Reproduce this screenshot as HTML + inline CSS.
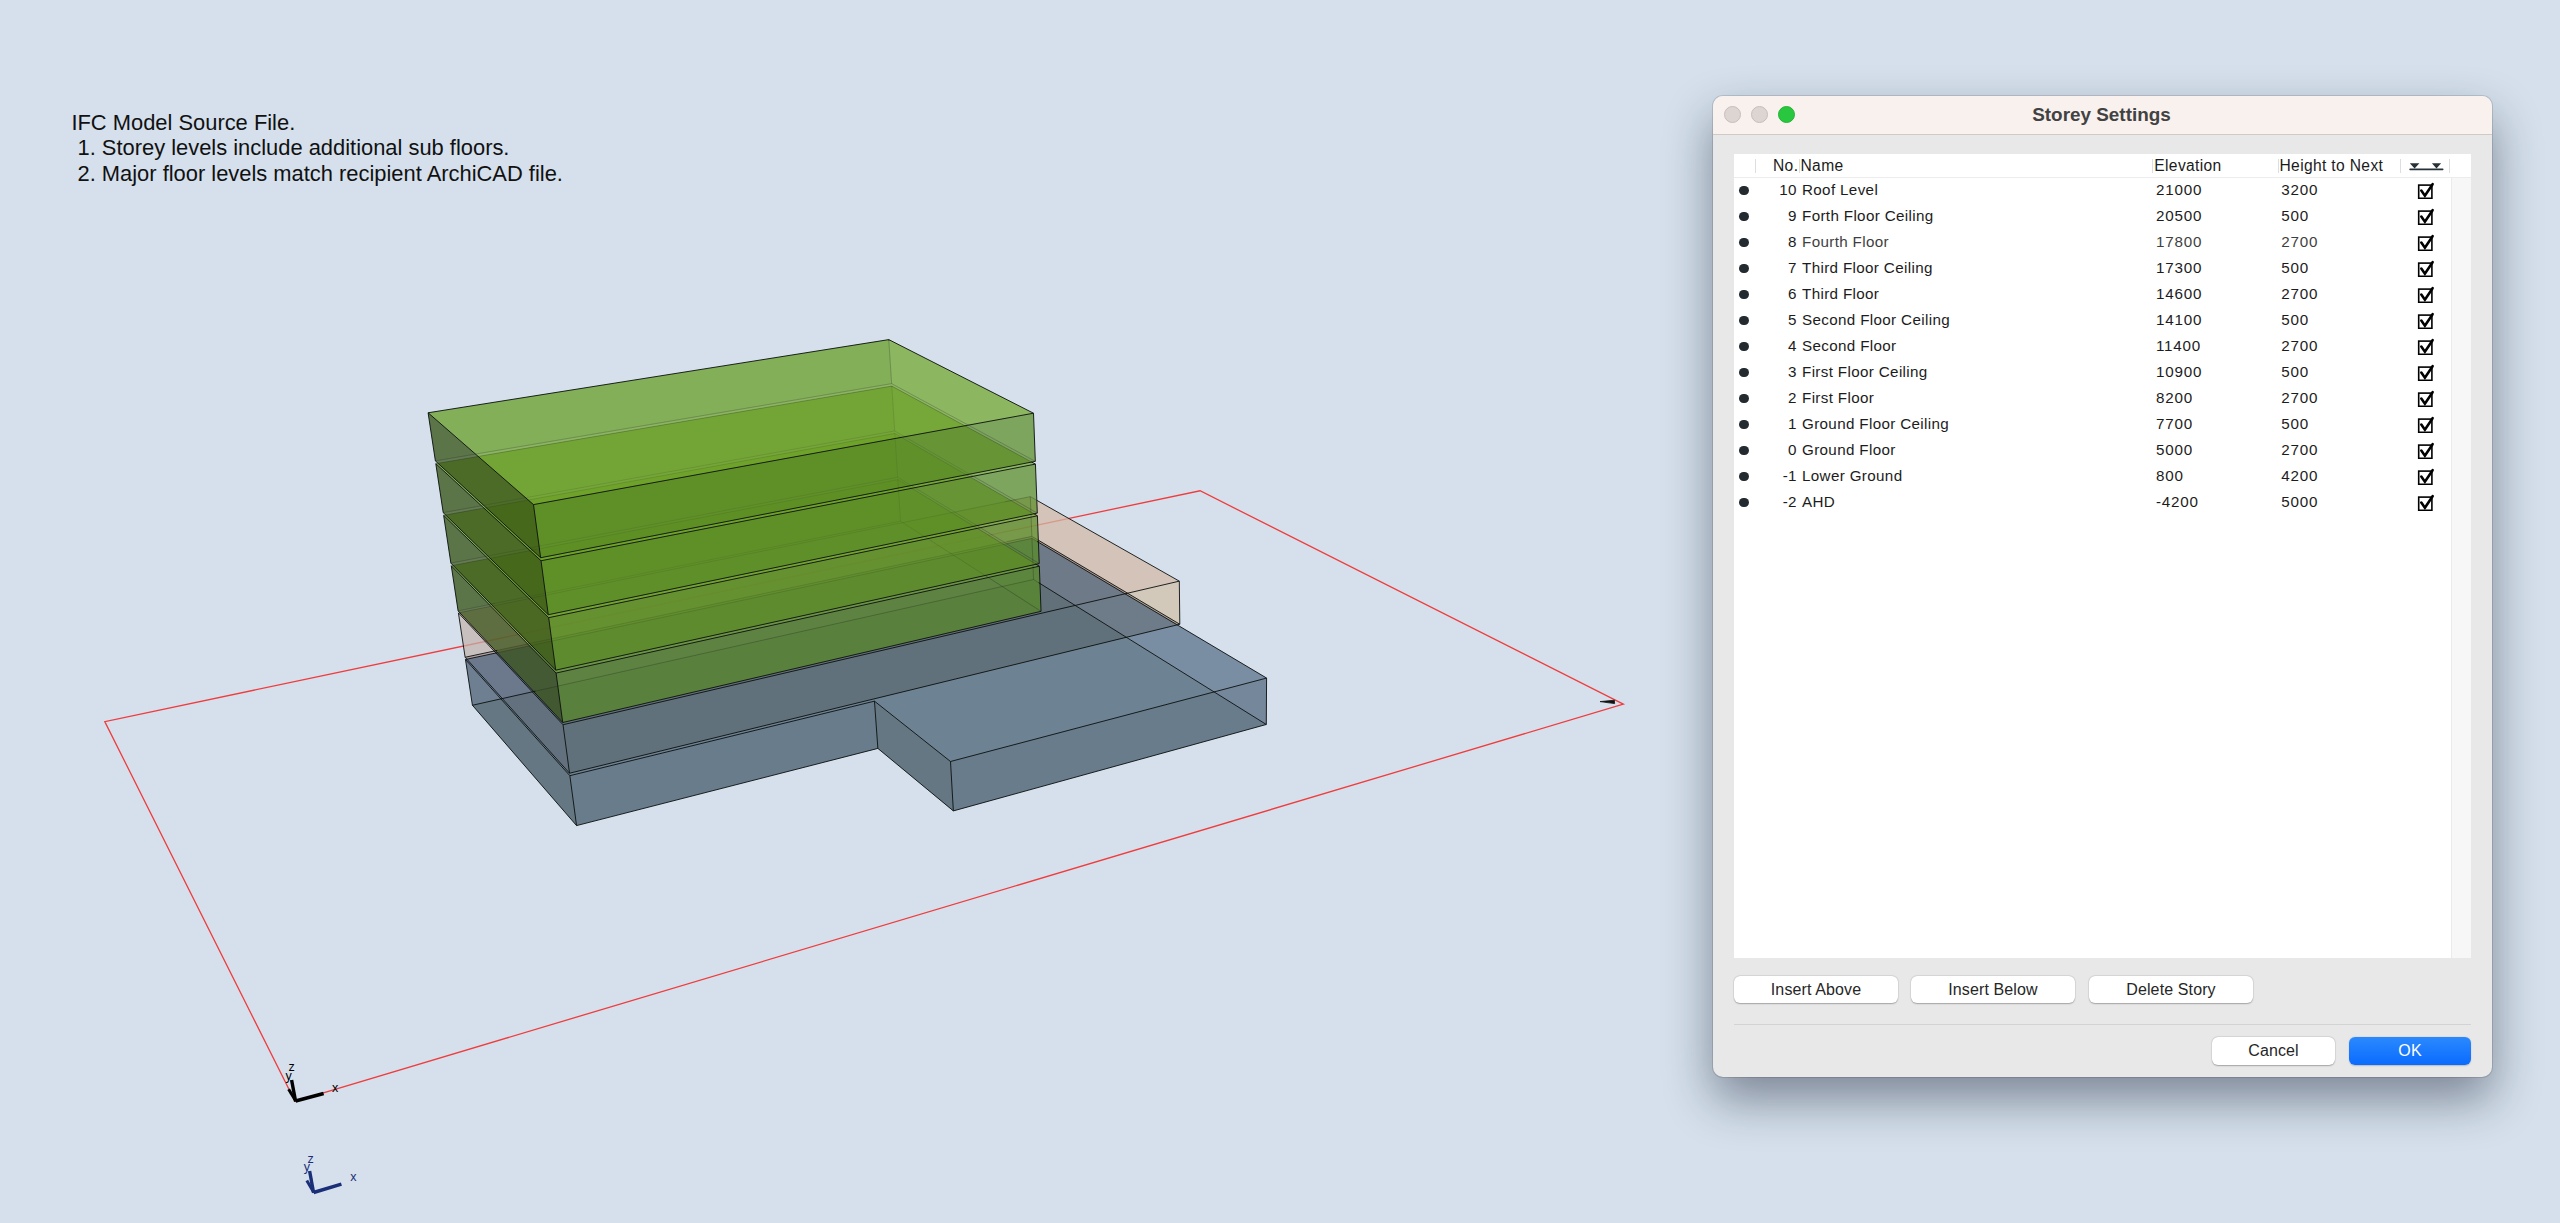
<!DOCTYPE html>
<html><head><meta charset="utf-8">
<style>
html,body{margin:0;padding:0;}
body{width:2560px;height:1223px;background:#d5e0ec;position:relative;overflow:hidden;font-family:"Liberation Sans",sans-serif;}
.note{position:absolute;left:71.4px;top:109.5px;font-size:21.9px;line-height:25.55px;color:#111;white-space:pre;}
svg.scene{position:absolute;left:0;top:0;}
.dlg{position:absolute;left:1713px;top:96px;width:779px;height:981px;border-radius:10px;background:#e8e8e8;
  box-shadow:0 0 0 1px rgba(0,0,0,0.12),0 22px 48px rgba(15,25,45,0.45);overflow:hidden;}
.tb{position:absolute;left:0;top:0;width:779px;height:38px;background:#f9f1ee;border-bottom:1px solid #cfcac8;}
.tb .t{position:absolute;left:-1px;width:779px;top:0;text-align:center;font-weight:bold;font-size:18.9px;line-height:38px;color:#424242;}
.light{position:absolute;top:10.1px;width:15px;height:15px;border-radius:50%;background:#ddd5d2;border:0.8px solid #c7bdba;}
.light.g{background:#28c73f;border-color:#22b437;}
.tbl{position:absolute;left:21px;top:58px;width:737px;height:804px;background:#fff;}
.hdr{position:absolute;left:0;top:0;width:737px;height:23px;border-bottom:1px solid #ececec;}
.sep{position:absolute;top:5px;width:1px;height:14px;background:#dedede;}
.h{position:absolute;top:0px;font-size:15.6px;line-height:23px;color:#1b1b1b;white-space:pre;letter-spacing:0.35px;}
.sb{position:absolute;left:717px;top:24px;width:20px;height:780px;background:#f7f7f7;border-left:1px solid #ebebeb;box-sizing:border-box;}
.row{position:absolute;left:0;width:717px;height:26px;font-size:15.2px;color:#1c1c1c;letter-spacing:0.35px;}
.row span{position:absolute;top:0;line-height:26px;white-space:pre;}
.row.dim .nm,.row.dim .el,.row.dim .ht{color:#3f3f3f;}
.dot{position:absolute;left:5.3px;top:8.6px;width:9.6px;height:9.6px;border-radius:50%;background:#232b30;}
.no{right:654.4px;text-align:right;letter-spacing:0.2px;}
.nm{left:68px;}
.el{left:422px;letter-spacing:0.8px;}
.ht{left:547.2px;letter-spacing:0.8px;}
.cb{position:absolute;left:682.6px;top:4px;}
.btn{position:absolute;height:27px;background:#fff;border-radius:6px;box-shadow:0 0.5px 1.5px rgba(0,0,0,0.28),0 0 0 0.5px rgba(0,0,0,0.06);
  font-size:16px;line-height:27.6px;text-align:center;color:#262626;letter-spacing:0.12px;}
.hr{position:absolute;left:21px;top:928px;width:737px;height:1px;background:#d3d3d3;}
.ok{background:linear-gradient(#2b89fd,#0a6bfe);color:#fff;box-shadow:0 0.5px 1.5px rgba(0,0,0,0.2);}
</style></head><body>
<div class="note">IFC Model Source File.
 1. Storey levels include additional sub floors.
 2. Major floor levels match recipient ArchiCAD file.</div>
<svg class="scene" width="2560" height="1223" viewBox="0 0 2560 1223">
<polygon points="294.97,1101.28 1623.34,704.17 1200.06,490.76 104.79,721.63" fill="none" stroke="#f03c3c" stroke-width="1.3"/>
<polygon points="1179.32,581.15 1030.31,496.63 1031.87,536.37 1179.80,624.24" fill="rgb(222,203,187)" fill-opacity="0.476"/>
<polygon points="458.42,612.92 1030.31,496.63 1031.87,536.37 465.14,657.26" fill="rgb(161,164,146)" fill-opacity="0.476"/>
<polygon points="569.53,773.22 1179.80,624.24 1031.87,536.37 465.14,657.26" fill="rgb(69,36,27)" fill-opacity="0.476"/>
<polygon points="563.02,724.73 1179.32,581.15 1030.31,496.63 458.42,612.92" fill="rgb(205,175,151)" fill-opacity="0.476"/>
<polygon points="563.02,724.73 1179.32,581.15 1179.80,624.24 569.53,773.22" fill="rgb(203,187,159)" fill-opacity="0.476"/>
<polygon points="563.02,724.73 458.42,612.92 465.14,657.26 569.53,773.22" fill="rgb(212,188,187)" fill-opacity="0.476"/>
<polygon points="465.48,659.51 1031.95,538.39 1033.57,579.50 472.41,705.26" fill="rgb(72,92,116)" fill-opacity="0.473"/>
<polygon points="1266.58,678.07 1031.95,538.39 1033.57,579.50 1266.31,724.48" fill="rgb(85,103,120)" fill-opacity="0.473"/>
<polygon points="576.55,825.60 877.86,748.41 953.35,810.90 1266.31,724.48 1033.57,579.50 472.41,705.26" fill="rgb(33,61,61)" fill-opacity="0.473"/>
<polygon points="569.86,775.68 874.47,701.15 950.51,761.49 1266.58,678.07 1031.95,538.39 465.48,659.51" fill="rgb(88,113,144)" fill-opacity="0.473"/>
<polygon points="569.86,775.68 465.48,659.51 472.41,705.26 576.55,825.60" fill="rgb(70,88,108)" fill-opacity="0.473"/>
<polygon points="950.51,761.49 1266.58,678.07 1266.31,724.48 953.35,810.90" fill="rgb(78,98,127)" fill-opacity="0.473"/>
<polygon points="950.51,761.49 874.47,701.15 877.86,748.41 953.35,810.90" fill="rgb(70,88,108)" fill-opacity="0.473"/>
<polygon points="569.86,775.68 874.47,701.15 877.86,748.41 576.55,825.60" fill="rgb(78,98,127)" fill-opacity="0.473"/>
<polygon points="451.27,565.77 897.81,479.67 900.48,521.16 458.11,610.91" fill="rgb(61,117,0)" fill-opacity="0.447"/>
<polygon points="1039.33,566.20 897.81,479.67 900.48,521.16 1041.05,611.34" fill="rgb(96,150,34)" fill-opacity="0.447"/>
<polygon points="443.63,515.35 894.84,433.44 897.66,477.26 450.87,563.14" fill="rgb(61,117,0)" fill-opacity="0.447"/>
<polygon points="1037.41,515.79 894.84,433.44 897.66,477.26 1039.23,563.57" fill="rgb(96,150,34)" fill-opacity="0.447"/>
<polygon points="435.79,463.65 891.79,386.11 894.68,430.98 443.22,512.67" fill="rgb(61,117,0)" fill-opacity="0.447"/>
<polygon points="1035.44,464.09 891.79,386.11 894.68,430.98 1037.31,513.11" fill="rgb(96,150,34)" fill-opacity="0.447"/>
<polygon points="428.08,412.77 888.80,339.62 891.63,383.61 435.38,460.92" fill="rgb(61,117,0)" fill-opacity="0.447"/>
<polygon points="1033.50,413.21 888.80,339.62 891.63,383.61 1035.33,461.35" fill="rgb(96,150,34)" fill-opacity="0.447"/>
<polygon points="562.73,722.53 1041.05,611.34 900.48,521.16 458.11,610.91" fill="rgb(98,136,46)" fill-opacity="0.447"/>
<polygon points="556.09,673.05 1039.33,566.20 897.81,479.67 451.27,565.77" fill="rgb(115,175,35)" fill-opacity="0.447"/>
<polygon points="555.71,670.17 1039.23,563.57 897.66,477.26 450.87,563.14" fill="rgb(98,136,46)" fill-opacity="0.447"/>
<polygon points="548.67,617.68 1037.41,515.79 894.84,433.44 443.63,515.35" fill="rgb(115,175,35)" fill-opacity="0.447"/>
<polygon points="548.27,614.73 1037.31,513.11 894.68,430.98 443.22,512.67" fill="rgb(98,136,46)" fill-opacity="0.447"/>
<polygon points="541.03,560.75 1035.44,464.09 891.79,386.11 435.79,463.65" fill="rgb(115,175,35)" fill-opacity="0.447"/>
<polygon points="540.63,557.74 1035.33,461.35 891.63,383.61 435.38,460.92" fill="rgb(98,136,46)" fill-opacity="0.447"/>
<polygon points="533.50,504.60 1033.50,413.21 888.80,339.62 428.08,412.77" fill="rgb(115,175,35)" fill-opacity="0.447"/>
<polygon points="556.09,673.05 1039.33,566.20 1041.05,611.34 562.73,722.53" fill="rgb(80,134,29)" fill-opacity="0.447"/>
<polygon points="556.09,673.05 451.27,565.77 458.11,610.91 562.73,722.53" fill="rgb(24,45,0)" fill-opacity="0.447"/>
<polygon points="548.67,617.68 1037.41,515.79 1039.23,563.57 555.71,670.17" fill="rgb(80,134,29)" fill-opacity="0.447"/>
<polygon points="548.67,617.68 443.63,515.35 450.87,563.14 555.71,670.17" fill="rgb(24,45,0)" fill-opacity="0.447"/>
<polygon points="541.03,560.75 1035.44,464.09 1037.31,513.11 548.27,614.73" fill="rgb(80,134,29)" fill-opacity="0.447"/>
<polygon points="541.03,560.75 435.79,463.65 443.22,512.67 548.27,614.73" fill="rgb(24,45,0)" fill-opacity="0.447"/>
<polygon points="533.50,504.60 1033.50,413.21 1035.33,461.35 540.63,557.74" fill="rgb(80,134,29)" fill-opacity="0.447"/>
<polygon points="533.50,504.60 428.08,412.77 435.38,460.92 540.63,557.74" fill="rgb(24,45,0)" fill-opacity="0.447"/>
<path d="M910.57 485.13L897.66 477.26M535.86 546.80L897.66 477.26M894.91 434.54L897.66 477.26M907.47 485.58L897.81 479.67M536.21 549.39L897.81 479.67M923.10 535.67L900.48 521.16M530.38 596.25L900.48 521.16M897.81 479.67L900.48 521.16M538.64 596.61L953.77 512.19" stroke="rgba(12,16,14,0.08)" stroke-width="1" fill="none"/>
<path d="M969.47 474.05L894.68 430.98M480.45 505.94L894.68 430.98M891.86 387.24L894.68 430.98M966.02 474.56L894.84 433.44M480.84 508.60L894.84 433.44M975.51 524.72L910.57 485.13M487.69 556.06L535.86 546.80M894.84 433.44L894.91 434.54M975.63 527.25L907.47 485.58M488.06 558.67L536.21 549.39M984.97 575.36L923.10 535.67M494.53 603.53L530.38 596.25M490.84 606.33L538.64 596.61M953.77 512.19L1005.11 501.75M528.89 643.66L1006.88 541.70M1030.93 512.60L1031.01 514.59M529.20 645.89L1006.97 543.73M1032.88 562.11L1033.00 565.18" stroke="rgba(12,16,14,0.12)" stroke-width="1" fill="none"/>
<path d="M1035.33 461.35L891.63 383.61M435.38 460.92L891.63 383.61M888.87 340.73L891.63 383.61M1031.46 461.93L891.79 386.11M435.79 463.65L891.79 386.11M1037.31 513.11L969.47 474.05M443.22 512.67L480.45 505.94M891.79 386.11L891.86 387.24M1033.47 513.51L966.02 474.56M443.63 515.35L480.84 508.60M1039.23 563.57L975.51 524.72M450.87 563.14L487.69 556.06M1035.42 563.81L975.63 527.25M451.27 565.77L488.06 558.67M1041.05 611.34L984.97 575.36M458.11 610.91L494.53 603.53M1037.09 500.48L1030.31 496.63M458.42 612.92L490.84 606.33M1005.11 501.75L1030.31 496.63M1038.61 540.38L1031.87 536.37M497.24 650.41L528.89 643.66M1006.88 541.70L1031.87 536.37M1030.31 496.63L1030.93 512.60M1031.01 514.59L1031.87 536.37M1037.02 541.41L1031.95 538.39M497.56 652.65L529.20 645.89M1006.97 543.73L1031.95 538.39M1038.60 582.63L1033.57 579.50M535.48 691.13L1033.57 579.50M1031.95 538.39L1032.88 562.11M1033.00 565.18L1033.57 579.50" stroke="rgba(12,16,14,0.24)" stroke-width="1" fill="none"/>
<path d="M533.50 504.60L1033.50 413.21M1033.50 413.21L888.80 339.62M428.08 412.77L888.80 339.62M533.50 504.60L428.08 412.77M540.63 557.74L1035.33 461.35M540.63 557.74L435.38 460.92M1033.50 413.21L1035.33 461.35M533.50 504.60L540.63 557.74M888.80 339.62L888.87 340.73M428.08 412.77L435.38 460.92M541.03 560.75L1035.44 464.09M1035.44 464.09L1031.46 461.93M541.03 560.75L435.79 463.65M548.27 614.73L1037.31 513.11M548.27 614.73L443.22 512.67M1035.44 464.09L1037.31 513.11M541.03 560.75L548.27 614.73M435.79 463.65L443.22 512.67M548.67 617.68L1037.41 515.79M1037.41 515.79L1033.47 513.51M548.67 617.68L443.63 515.35M555.71 670.17L1039.23 563.57M555.71 670.17L450.87 563.14M1037.41 515.79L1039.23 563.57M548.67 617.68L555.71 670.17M443.63 515.35L450.87 563.14M556.09 673.05L1039.33 566.20M1039.33 566.20L1035.42 563.81M556.09 673.05L451.27 565.77M562.73 722.53L1041.05 611.34M562.73 722.53L458.11 610.91M1039.33 566.20L1041.05 611.34M556.09 673.05L562.73 722.53M451.27 565.77L458.11 610.91M563.02 724.73L1179.32 581.15M1179.32 581.15L1037.09 500.48M563.02 724.73L458.42 612.92M569.53 773.22L1179.80 624.24M1179.80 624.24L1038.61 540.38M465.14 657.26L497.24 650.41M569.53 773.22L465.14 657.26M1179.32 581.15L1179.80 624.24M563.02 724.73L569.53 773.22M458.42 612.92L465.14 657.26M569.86 775.68L874.47 701.15M950.51 761.49L874.47 701.15M950.51 761.49L1266.58 678.07M1266.58 678.07L1037.02 541.41M465.48 659.51L497.56 652.65M569.86 775.68L465.48 659.51M576.55 825.60L877.86 748.41M953.35 810.90L877.86 748.41M953.35 810.90L1266.31 724.48M1266.31 724.48L1038.60 582.63M472.41 705.26L535.48 691.13M576.55 825.60L472.41 705.26M465.48 659.51L472.41 705.26M569.86 775.68L576.55 825.60M1266.58 678.07L1266.31 724.48M950.51 761.49L953.35 810.90M874.47 701.15L877.86 748.41" stroke="rgba(12,16,14,0.90)" stroke-width="1" fill="none"/>
<g fill="none" stroke-linecap="butt">
 <path d="M295.6 1101 L323.6 1093.4" stroke="#000" stroke-width="3.6"/>
 <path d="M295.6 1101.5 L291.6 1080" stroke="#000" stroke-width="3.4"/>
 <path d="M295.8 1101 L288.6 1089.2" stroke="#000" stroke-width="3"/>
 <path d="M313.6 1192.5 L341.4 1184.1" stroke="#1b2e78" stroke-width="3.6"/>
 <path d="M313.6 1192.8 L309.6 1171" stroke="#1b2e78" stroke-width="3.4"/>
 <path d="M313.8 1192.4 L306.8 1180.6" stroke="#1b2e78" stroke-width="3"/>
 <path d="M1600 701.6 L1614.4 700.2 L1614.6 703.6 Z" fill="#111" stroke="#111" stroke-width="0.8" stroke-linejoin="round"/>
</g>
<g font-family="Liberation Sans, sans-serif" font-size="12.5px">
 <text x="288.6" y="1070.6" fill="#000">z</text>
 <text x="285.4" y="1079.6" fill="#000">y</text>
 <text x="332" y="1091.6" fill="#000">x</text>
 <text x="307.6" y="1162.6" fill="#1b2e78">z</text>
 <text x="303.8" y="1171" fill="#1b2e78">y</text>
 <text x="350.2" y="1181.4" fill="#1b2e78">x</text>
</g>
</svg>
<div class="dlg">
 <div class="tb"><div class="light" style="left:11px"></div><div class="light" style="left:38.1px"></div><div class="light g" style="left:65.3px"></div><div class="t">Storey Settings</div></div>
 <div class="tbl">
  <div class="hdr">
   <div class="sep" style="left:21px"></div><div class="sep" style="left:64.5px"></div><div class="sep" style="left:418.3px"></div><div class="sep" style="left:544px"></div><div class="sep" style="left:666.4px"></div><div class="sep" style="left:715.4px"></div>
   <div class="h" style="left:39px">No.</div><div class="h" style="left:66.5px">Name</div><div class="h" style="left:420.3px">Elevation</div><div class="h" style="left:545.5px">Height to Next</div>
   <svg style="position:absolute;left:673.7px;top:7.6px" width="38" height="10" viewBox="0 0 38 10"><path d="M1.8 1.2 H11.4 L6.6 6.4 Z M23.9 1.2 H33.1 L28.5 6.4 Z" fill="#263238"/><rect x="1.3" y="6.6" width="34.2" height="1.6" rx="0.8" fill="#263238"/></svg>
  </div>
  <div class="sb"></div>
<div class="row" style="top:23px"><i class="dot"></i><span class="no">10</span><span class="nm">Roof Level</span><span class="el">21000</span><span class="ht">3200</span><svg class="cb" width="18" height="18" viewBox="0 0 18 18"><rect x="1.7" y="4.1" width="13.2" height="13.2" fill="none" stroke="#000" stroke-width="1.6"/><path d="M4.3 9.6 L7.9 14.8 L15.6 3.2" fill="none" stroke="#000" stroke-width="2.6" stroke-linecap="round" stroke-linejoin="miter"/></svg></div>
<div class="row" style="top:49px"><i class="dot"></i><span class="no">9</span><span class="nm">Forth Floor Ceiling</span><span class="el">20500</span><span class="ht">500</span><svg class="cb" width="18" height="18" viewBox="0 0 18 18"><rect x="1.7" y="4.1" width="13.2" height="13.2" fill="none" stroke="#000" stroke-width="1.6"/><path d="M4.3 9.6 L7.9 14.8 L15.6 3.2" fill="none" stroke="#000" stroke-width="2.6" stroke-linecap="round" stroke-linejoin="miter"/></svg></div>
<div class="row dim" style="top:75px"><i class="dot"></i><span class="no">8</span><span class="nm">Fourth Floor</span><span class="el">17800</span><span class="ht">2700</span><svg class="cb" width="18" height="18" viewBox="0 0 18 18"><rect x="1.7" y="4.1" width="13.2" height="13.2" fill="none" stroke="#000" stroke-width="1.6"/><path d="M4.3 9.6 L7.9 14.8 L15.6 3.2" fill="none" stroke="#000" stroke-width="2.6" stroke-linecap="round" stroke-linejoin="miter"/></svg></div>
<div class="row" style="top:101px"><i class="dot"></i><span class="no">7</span><span class="nm">Third Floor Ceiling</span><span class="el">17300</span><span class="ht">500</span><svg class="cb" width="18" height="18" viewBox="0 0 18 18"><rect x="1.7" y="4.1" width="13.2" height="13.2" fill="none" stroke="#000" stroke-width="1.6"/><path d="M4.3 9.6 L7.9 14.8 L15.6 3.2" fill="none" stroke="#000" stroke-width="2.6" stroke-linecap="round" stroke-linejoin="miter"/></svg></div>
<div class="row" style="top:127px"><i class="dot"></i><span class="no">6</span><span class="nm">Third Floor</span><span class="el">14600</span><span class="ht">2700</span><svg class="cb" width="18" height="18" viewBox="0 0 18 18"><rect x="1.7" y="4.1" width="13.2" height="13.2" fill="none" stroke="#000" stroke-width="1.6"/><path d="M4.3 9.6 L7.9 14.8 L15.6 3.2" fill="none" stroke="#000" stroke-width="2.6" stroke-linecap="round" stroke-linejoin="miter"/></svg></div>
<div class="row" style="top:153px"><i class="dot"></i><span class="no">5</span><span class="nm">Second Floor Ceiling</span><span class="el">14100</span><span class="ht">500</span><svg class="cb" width="18" height="18" viewBox="0 0 18 18"><rect x="1.7" y="4.1" width="13.2" height="13.2" fill="none" stroke="#000" stroke-width="1.6"/><path d="M4.3 9.6 L7.9 14.8 L15.6 3.2" fill="none" stroke="#000" stroke-width="2.6" stroke-linecap="round" stroke-linejoin="miter"/></svg></div>
<div class="row" style="top:179px"><i class="dot"></i><span class="no">4</span><span class="nm">Second Floor</span><span class="el">11400</span><span class="ht">2700</span><svg class="cb" width="18" height="18" viewBox="0 0 18 18"><rect x="1.7" y="4.1" width="13.2" height="13.2" fill="none" stroke="#000" stroke-width="1.6"/><path d="M4.3 9.6 L7.9 14.8 L15.6 3.2" fill="none" stroke="#000" stroke-width="2.6" stroke-linecap="round" stroke-linejoin="miter"/></svg></div>
<div class="row" style="top:205px"><i class="dot"></i><span class="no">3</span><span class="nm">First Floor Ceiling</span><span class="el">10900</span><span class="ht">500</span><svg class="cb" width="18" height="18" viewBox="0 0 18 18"><rect x="1.7" y="4.1" width="13.2" height="13.2" fill="none" stroke="#000" stroke-width="1.6"/><path d="M4.3 9.6 L7.9 14.8 L15.6 3.2" fill="none" stroke="#000" stroke-width="2.6" stroke-linecap="round" stroke-linejoin="miter"/></svg></div>
<div class="row" style="top:231px"><i class="dot"></i><span class="no">2</span><span class="nm">First Floor</span><span class="el">8200</span><span class="ht">2700</span><svg class="cb" width="18" height="18" viewBox="0 0 18 18"><rect x="1.7" y="4.1" width="13.2" height="13.2" fill="none" stroke="#000" stroke-width="1.6"/><path d="M4.3 9.6 L7.9 14.8 L15.6 3.2" fill="none" stroke="#000" stroke-width="2.6" stroke-linecap="round" stroke-linejoin="miter"/></svg></div>
<div class="row" style="top:257px"><i class="dot"></i><span class="no">1</span><span class="nm">Ground Floor Ceiling</span><span class="el">7700</span><span class="ht">500</span><svg class="cb" width="18" height="18" viewBox="0 0 18 18"><rect x="1.7" y="4.1" width="13.2" height="13.2" fill="none" stroke="#000" stroke-width="1.6"/><path d="M4.3 9.6 L7.9 14.8 L15.6 3.2" fill="none" stroke="#000" stroke-width="2.6" stroke-linecap="round" stroke-linejoin="miter"/></svg></div>
<div class="row" style="top:283px"><i class="dot"></i><span class="no">0</span><span class="nm">Ground Floor</span><span class="el">5000</span><span class="ht">2700</span><svg class="cb" width="18" height="18" viewBox="0 0 18 18"><rect x="1.7" y="4.1" width="13.2" height="13.2" fill="none" stroke="#000" stroke-width="1.6"/><path d="M4.3 9.6 L7.9 14.8 L15.6 3.2" fill="none" stroke="#000" stroke-width="2.6" stroke-linecap="round" stroke-linejoin="miter"/></svg></div>
<div class="row" style="top:309px"><i class="dot"></i><span class="no">-1</span><span class="nm">Lower Ground</span><span class="el">800</span><span class="ht">4200</span><svg class="cb" width="18" height="18" viewBox="0 0 18 18"><rect x="1.7" y="4.1" width="13.2" height="13.2" fill="none" stroke="#000" stroke-width="1.6"/><path d="M4.3 9.6 L7.9 14.8 L15.6 3.2" fill="none" stroke="#000" stroke-width="2.6" stroke-linecap="round" stroke-linejoin="miter"/></svg></div>
<div class="row" style="top:335px"><i class="dot"></i><span class="no">-2</span><span class="nm">AHD</span><span class="el">-4200</span><span class="ht">5000</span><svg class="cb" width="18" height="18" viewBox="0 0 18 18"><rect x="1.7" y="4.1" width="13.2" height="13.2" fill="none" stroke="#000" stroke-width="1.6"/><path d="M4.3 9.6 L7.9 14.8 L15.6 3.2" fill="none" stroke="#000" stroke-width="2.6" stroke-linecap="round" stroke-linejoin="miter"/></svg></div>
 </div>
 <div class="btn" style="left:21px;top:880px;width:164px">Insert Above</div>
 <div class="btn" style="left:198px;top:880px;width:164px">Insert Below</div>
 <div class="btn" style="left:376px;top:880px;width:164px">Delete Story</div>
 <div class="hr"></div>
 <div class="btn" style="left:499px;top:941px;width:123px;height:28px;line-height:28px">Cancel</div>
 <div class="btn ok" style="left:636px;top:941px;width:122px;height:28px;line-height:28px">OK</div>
</div>
</body></html>
